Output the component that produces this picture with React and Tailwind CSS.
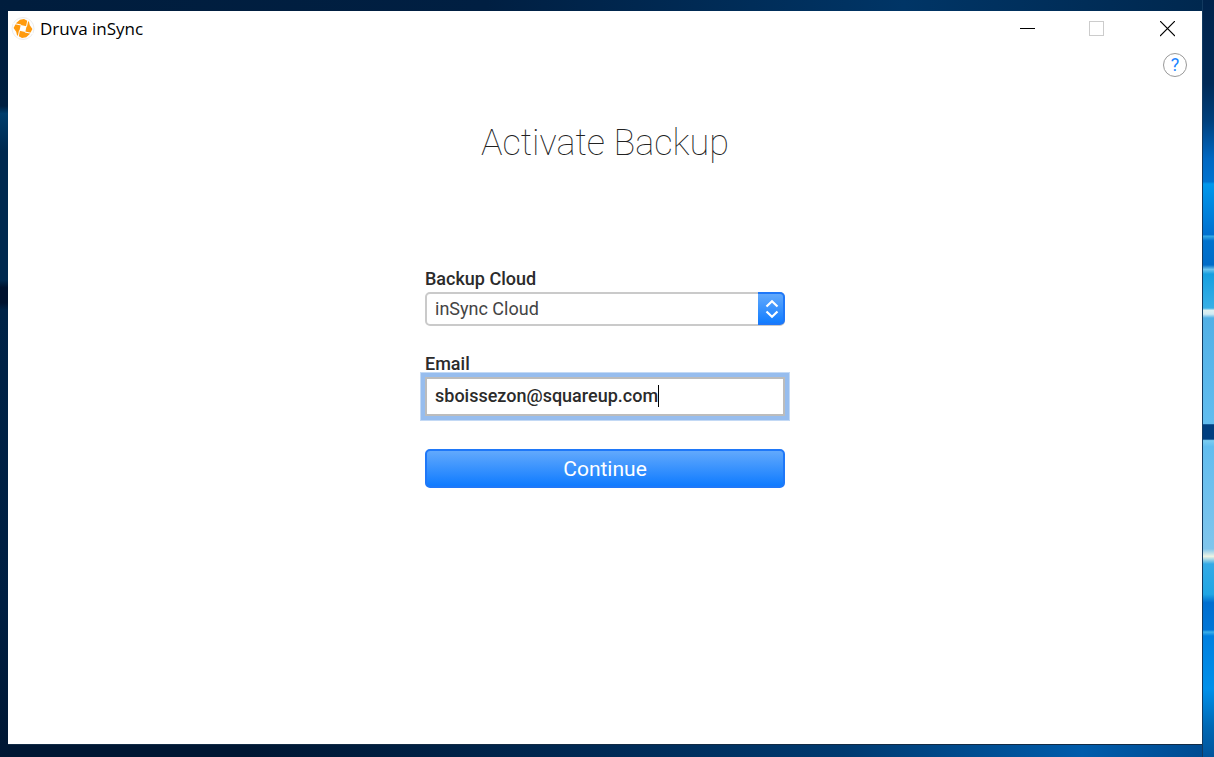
import { useState } from "react";

function Logo() {
  return (
    <svg viewBox="0 0 24 24" className="size-6" aria-hidden="true">
      <circle cx="12" cy="11.5" r="11" fill="#fdfdfd" stroke="#ececec" strokeWidth="1" />
      <g transform="translate(0 -0.5)">
        <path
          d="M9 3.2 L13 2.6 L18 5.2 L18.8 8.8 L21.4 12.4 L18.8 17.6 L15.2 20.8 L11 21.4 L6 18.8 L5.2 15.2 L2.6 11.6 L5.2 6.4 Z"
          fill="#ff9a0c"
        />
        <g transform="rotate(12 12 12)" fill="#fdfdfd" stroke="#fdfdfd">
          <rect x="9" y="9" width="6" height="6" stroke="none" />
          <path d="M15 9.4V1M14.6 15H23M9 14.6V23M9.4 9H1" strokeWidth="1" />
        </g>
      </g>
    </svg>
  );
}

function TitleBar() {
  return (
    <header className="flex h-9 items-center justify-between pr-2.5">
      <div className="flex items-center gap-[5px] pl-[3px] font-['Open_Sans',sans-serif] text-[17px] text-black">
        <Logo />
        <span>Druva inSync</span>
      </div>
      <div className="flex items-center gap-6">
        <button type="button" aria-label="Minimize" className="flex h-9 w-[45px] items-center justify-center">
          <svg width="15" height="15" viewBox="0 0 15 15" shapeRendering="crispEdges">
            <path d="M0 6.5H15" stroke="#000" />
          </svg>
        </button>
        <button type="button" aria-label="Maximize" disabled className="flex h-9 w-[45px] items-center justify-center">
          <svg width="15" height="16" viewBox="0 0 15 16" shapeRendering="crispEdges">
            <rect x="0.5" y="0.5" width="14" height="14" fill="none" stroke="#ccc" />
          </svg>
        </button>
        <button type="button" aria-label="Close" className="flex h-9 w-[49px] items-center justify-center">
          <svg width="15" height="16" viewBox="0 0 15 16">
            <path d="M0 0L15 15M15 0L0 15" stroke="#000" strokeWidth="1.2" />
          </svg>
        </button>
      </div>
    </header>
  );
}

function CloudSelect() {
  return (
    <div className="relative flex">
      <select
        id="cloud"
        className="h-[34px] w-full appearance-none rounded-[5px] border-2 border-[#cacaca] bg-white pr-8 pb-0.5 pl-2 text-[18px] text-[#444] outline-none"
      >
        <option>inSync Cloud</option>
        <option>inSync GovCloud</option>
      </select>
      <span className="pointer-events-none absolute top-0 right-0 flex h-[33px] w-[27px] items-center justify-center rounded-r-[5px] border-2 border-l-0 border-[#1f78f8] bg-[linear-gradient(#62a9fc,#127dff)] pl-0.5">
        <svg width="14" height="20" viewBox="0 0 14 20" fill="none" stroke="#fff" strokeWidth="2.2">
          <path d="M1.5 7.5L7 2.2L12.5 7.5M1.5 12.5L7 17.8L12.5 12.5" />
        </svg>
      </span>
    </div>
  );
}

function ActivateForm() {
  const [email, setEmail] = useState("sboissezon@squareup.com");
  const [edited, setEdited] = useState(false);
  return (
    <form className="flex w-[360px] max-w-full flex-col text-[18px] text-[#2b2b2b]" onSubmit={(e) => e.preventDefault()}>
      <label htmlFor="cloud" className="mb-[3px] leading-5 font-medium">
        Backup Cloud
      </label>
      <CloudSelect />
      <label htmlFor="email" className="mt-7 mb-[3px] leading-5 font-medium">
        Email
      </label>
      <div className="relative flex">
        <input
          id="email"
          type="email"
          value={email}
          onChange={(e) => {
            setEmail(e.target.value);
            setEdited(true);
          }}
          className="h-[39px] w-full border-2 border-[#bcbcbc] bg-white pb-0.5 pl-2 font-medium shadow-[0_0_0_4px_#97bdee,0_0_0_5px_#c3d9f5] outline-none"
        />
        {!edited && <span className="pointer-events-none absolute top-2 left-[233px] h-[22px] w-px bg-black" />}
      </div>
      <button
        type="submit"
        className="mt-[33px] flex h-[39px] items-center justify-center rounded-[5px] border-2 border-[#1f78f8] bg-[linear-gradient(#62a9fc,#0f7bff)] pt-0.5 text-[21px] text-white"
      >
        Continue
      </button>
    </form>
  );
}

export default function App() {
  return (
    <div className="grid min-h-screen grid-cols-[8px_minmax(0,1fr)_12px] font-[Roboto,sans-serif]">
      <div className="bg-[linear-gradient(#001d3d_0%,#001f40_14%,#003d6c_15%,#00294f_20%,#00294f_37%,#00122e_38%,#00122e_40%,#002347_41%,#001f42_80%,#001733_100%)]" />
      <div className="flex flex-col">
        <div className="h-[11px] bg-[linear-gradient(90deg,#001d3d,#001f42_40%,#003566_75%,#00284f)]" />
        <main className="flex flex-1 flex-col bg-white">
          <TitleBar />
          <div className="flex justify-end pt-1.5 pr-[15px]">
            <button
              type="button"
              aria-label="Help"
              className="flex size-6 items-center justify-center rounded-full border border-[#999] text-[18px] leading-none text-[#1a84ff]"
            >
              ?
            </button>
          </div>
          <div className="flex flex-1 flex-col items-center px-4 pt-[42px]">
            <h1 className="mb-[102px] text-[36px] leading-12 font-thin text-[#222]">Activate Backup</h1>
            <ActivateForm />
          </div>
        </main>
        <div className="h-[13px] border-t border-[#122b45] bg-[linear-gradient(90deg,#001733,#001733_20%,#002a55_50%,#003a70_70%,#005cab_90%,#004b91)]" />
      </div>
      <div className="border-l border-[#123a60] bg-[linear-gradient(#00234b_0%,#002a57_11%,#00407d_16%,#0068c2_21%,#0073d0_24%,#0098ec_24.3%,#0070cf_31%,#34aae6_31.2%,#0072cd_31.8%,#006cc8_35%,#6cc5ee_35.6%,#159fe0_36.2%,#38afe6_40.7%,#def0f0_41%,#d0eaf3_41.5%,#52b0e6_42%,#61bdef_56%,#003f80_56.1%,#003f80_58%,#7accf0_58.2%,#61bdef_59%,#80c5ec_72.5%,#eef4e4_73.5%,#34aae6_74.5%,#20a6e4_78.5%,#006fd0_79.6%,#0075d6_83.2%,#3ab0ea_83.5%,#0080e0_84%,#0090ea_91%,#0068b4_96%,#00549c_100%)]" />
    </div>
  );
}
